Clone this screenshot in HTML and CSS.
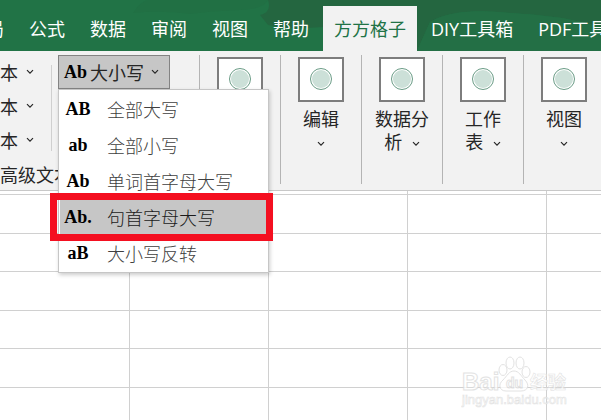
FILE: index.html
```html
<!DOCTYPE html>
<html lang="zh-CN">
<head>
    <meta charset="UTF-8">
    <meta name="viewport" content="width=device-width, initial-scale=1.0">
    <title>方方格子</title>
    <link rel="stylesheet" href="styles.css">
</head>
<body>
<svg class="symbols" aria-hidden="true">
    <symbol id="chevron" viewBox="0 0 8 6">
        <path d="M1 1.2 L4 4.2 L7 1.2" fill="none" stroke="currentColor" stroke-width="1.2"/>
    </symbol>
    <symbol id="placeholder" viewBox="0 0 46 45">
        <rect x="1" y="1" width="44" height="43" fill="#fff" stroke="#7d7d7d" stroke-width="2"/>
        <circle cx="23" cy="22" r="10.5" fill="#fff" stroke="#6a9c86" stroke-width="1"/>
        <circle cx="23" cy="22" r="9" fill="#cce0d8"/>
    </symbol>
</svg>

<header class="titlebar">
    <svg class="titlebar-art" viewBox="0 0 601 51" preserveAspectRatio="none" aria-hidden="true">
        <path d="M133 13 Q139 3 147 0 H268 Q264 9 240 10 Q210 11 190 14 Q160 10 133 13Z" fill="#217044"/>
        <path d="M268 0 H601 V27 Q560 15 510 13 Q455 7 430 22 L417 51 H323 V27 Q290 30 268 25 L260 15 Q272 12 268 0Z" fill="#246640"/>
        <path d="M430 22 Q455 7 510 13 Q560 15 601 27 V51 H417Z" fill="#236f45"/>
    </svg>
    <nav class="tabs">
        <button class="tab">页面布局</button>
        <button class="tab">公式</button>
        <button class="tab">数据</button>
        <button class="tab">审阅</button>
        <button class="tab">视图</button>
        <button class="tab">帮助</button>
        <button class="tab active">方方格子</button>
        <button class="tab">DIY工具箱</button>
        <button class="tab">PDF工具箱</button>
    </nav>
</header>

<section class="ribbon">
    <div class="text-group">
        <div class="text-tools">
            <div class="text-buttons">
                <button class="small-btn">文本 <svg class="chevron"><use href="#chevron"/></svg></button>
                <button class="small-btn">文本 <svg class="chevron"><use href="#chevron"/></svg></button>
                <button class="small-btn">文本 <svg class="chevron"><use href="#chevron"/></svg></button>
            </div>
            <div class="dropdown">
                <button class="dropdown-btn"><b class="glyph">Ab</b>大小写<svg class="chevron"><use href="#chevron"/></svg></button>
                <div class="menu">
                    <button class="menu-item"><b class="glyph">AB</b>全部大写</button>
                    <button class="menu-item"><b class="glyph">ab</b>全部小写</button>
                    <button class="menu-item"><b class="glyph">Ab</b>单词首字母大写</button>
                    <button class="menu-item selected"><b class="glyph">Ab.</b>句首字母大写</button>
                    <button class="menu-item"><b class="glyph">aB</b>大小写反转</button>
                </div>
            </div>
        </div>
        <div class="group-name">高级文本</div>
    </div>
    <button class="group" aria-label="数值"><svg class="group-icon"><use href="#placeholder"/></svg></button>
    <button class="group"><svg class="group-icon"><use href="#placeholder"/></svg><span>编辑<br><svg class="chevron"><use href="#chevron"/></svg></span></button>
    <button class="group"><svg class="group-icon"><use href="#placeholder"/></svg><span>数据分<br>析&nbsp; <svg class="chevron"><use href="#chevron"/></svg></span></button>
    <button class="group"><svg class="group-icon"><use href="#placeholder"/></svg><span>工作<br>表&nbsp; <svg class="chevron"><use href="#chevron"/></svg></span></button>
    <button class="group"><svg class="group-icon"><use href="#placeholder"/></svg><span>视图<br><svg class="chevron"><use href="#chevron"/></svg></span></button>
</section>

<main class="sheet">
    <svg class="watermark" viewBox="0 0 110 54" role="img" aria-label="Baidu经验">
        <g fill="#fff" stroke="#dcdcdc" stroke-width="1">
            <text class="wm-brand" x="1" y="34">Bai</text>
            <ellipse cx="42" cy="14" rx="4" ry="5.5"/>
            <ellipse cx="49" cy="7" rx="4" ry="6"/>
            <ellipse cx="59" cy="7" rx="4" ry="6"/>
            <ellipse cx="65" cy="16" rx="4" ry="5.5"/>
            <path d="M53 15 C58 15 60 20 64 24 C69 29 67 35 60 35 H45 C38 35 37 28 42 24 C46 20 48 15 53 15Z"/>
            <text class="wm-du" x="45" y="32">du</text>
            <text class="wm-cn" x="69" y="33">经验</text>
            <text class="wm-url" x="1" y="48">jingyan.baidu.com</text>
        </g>
    </svg>
</main>
</body>
</html>
```

FILE: styles.css
```css
* {
    box-sizing: border-box;
}

body {
    margin: 0;
    height: 100vh;
    display: flex;
    flex-direction: column;
    overflow: hidden;
    font-family: "Open Sans", "Noto Sans CJK SC", sans-serif;
    font-size: 18px;
    color: #262626;
    background: #fff;
}

button {
    margin: 0;
    padding: 0;
    border: none;
    background: none;
    font: inherit;
    color: inherit;
    white-space: nowrap;
    cursor: pointer;
}

.symbols {
    position: absolute;
    width: 0;
    height: 0;
}

.chevron {
    width: 8px;
    height: 6px;
    vertical-align: middle;
}

/* tabs */
.titlebar {
    position: relative;
    padding-top: 6px;
    background: #217346;
    overflow: hidden;
}

.titlebar-art {
    position: absolute;
    top: 0;
    left: 0;
    width: 100%;
    height: 100%;
}

.tabs {
    position: relative;
    display: flex;
    gap: 3px;
    height: 45px;
    margin-left: -79px;
}

.tab {
    flex: none;
    padding: 0 11px;
    line-height: 42px;
    color: #fff;
}

.tab.active {
    background: #f2f2f2;
    color: #217346;
}

/* ribbon */
.ribbon {
    display: flex;
    height: 140px;
    padding: 4px 0 6px;
    background: #f2f2f2;
    border-bottom: 1px solid #c8c8c8;
}

.text-group {
    flex: none;
    width: 199px;
}

.text-tools {
    display: flex;
    height: 106px;
}

.text-buttons {
    display: flex;
    flex-direction: column;
    align-items: flex-end;
    width: 52px;
    padding-right: 18px;
    background: linear-gradient(#d0d0d0, #d0d0d0) right 10px / 1px 86px no-repeat;
}

.small-btn {
    display: flex;
    align-items: center;
    gap: 8px;
    height: 34px;
}

.dropdown {
    position: relative;
    margin-left: 6px;
}

.dropdown-btn {
    display: flex;
    align-items: center;
    width: 112px;
    height: 34px;
    padding-left: 5px;
    background: #c6c6c6;
    border: 1px solid #838383;
}

.dropdown-btn .glyph {
    margin-right: 3px;
}

.dropdown-btn .chevron {
    margin-left: 7px;
}

.glyph {
    font-family: "Liberation Serif", serif;
    font-size: 18px;
    font-weight: 700;
    color: #000;
}

.menu {
    position: absolute;
    top: 34px;
    left: 0;
    z-index: 1;
    width: 211px;
    padding: 1px;
    background: #fff;
    border: 1px solid #c6c6c6;
    box-shadow: 1px 2px 4px rgba(0, 0, 0, 0.2);
}

.menu-item {
    position: relative;
    display: flex;
    align-items: center;
    width: 100%;
    height: 36px;
    font-weight: 300;
    color: #404040;
}

.menu-item .glyph {
    width: 36px;
    margin-right: 11px;
    text-align: center;
}

.menu-item.selected {
    background: #c6c6c6;
    color: #1a1a1a;
}

.menu-item.selected::after {
    content: "";
    position: absolute;
    inset: -6px -6px -6px -10px;
    border: 7px solid #f40f20;
}

.group-name {
    line-height: 28px;
    white-space: nowrap;
}

.group {
    flex: none;
    display: flex;
    flex-direction: column;
    align-items: center;
    width: 81px;
    border-left: 1px solid #b4b4b4;
    line-height: 23px;
}

.group-icon {
    width: 46px;
    height: 45px;
    margin: 2px 0 6px;
}

/* cells: two rows per tile */
.sheet {
    flex: 1;
    display: flex;
    justify-content: flex-end;
    align-items: flex-end;
    padding: 0 30px 10px 0;
    background:
        linear-gradient(to right, #d0d0d0 1px, transparent 1px) 129px 0 / 139px 77px,
        linear-gradient(#d0d0d0 1px, transparent 1px 39px, #d0d0d0 39px 40px, transparent 40px) 0 3px / 139px 77px;
}

.watermark {
    width: 110px;
    height: 54px;
    opacity: 0.8;
}

.wm-brand {
    font: bold 24px "Liberation Sans", sans-serif;
}

.wm-du {
    font: bold 14px "Liberation Sans", sans-serif;
}

.wm-cn {
    font: bold 18px "Noto Sans CJK SC", sans-serif;
    stroke-width: 0.6;
}

.wm-url {
    font: 13px "Liberation Sans", sans-serif;
    stroke-width: 0.6;
}
```
